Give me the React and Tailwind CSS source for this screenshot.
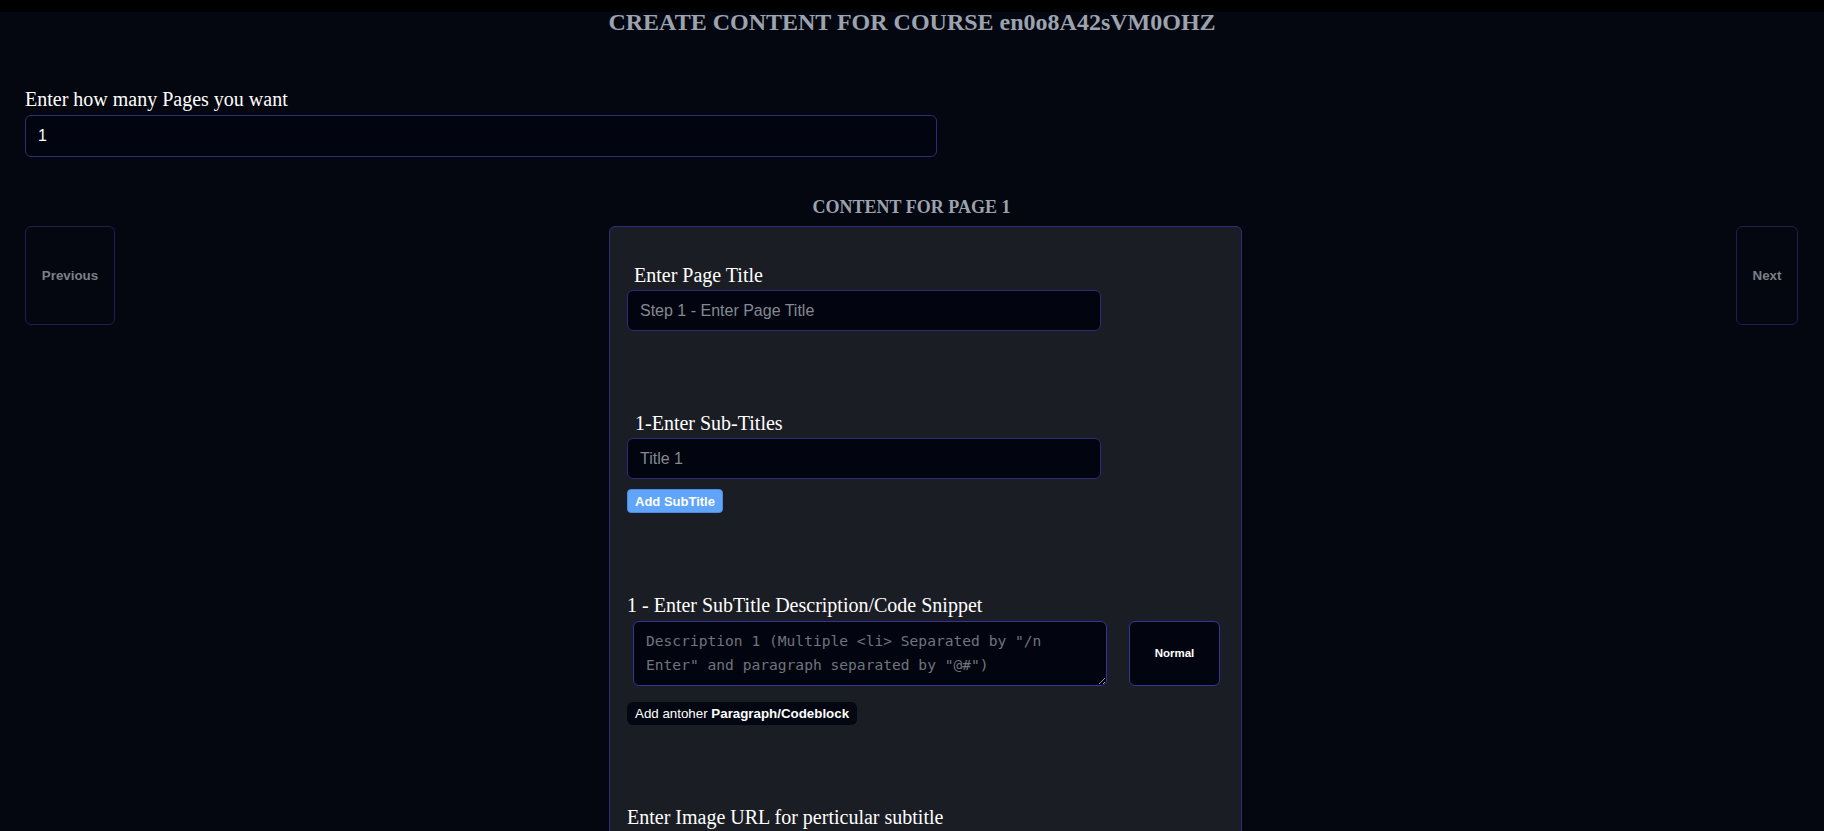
import React, { useState } from 'react';

const sans = "font-['Liberation_Sans',Arial,sans-serif]";

const Field = ({ placeholder, value, onChange, className = '' }) => (
    <input
        className={`${sans} block w-[474px] h-[41px] rounded-md border border-[#2e2b7a] bg-[#02050f] px-3 text-base text-white placeholder:text-[#858993] outline-none ${className}`}
        placeholder={placeholder}
        value={value}
        onChange={e => onChange(e.target.value)}
    />
);

const PageCard = () => {
    const [title, setTitle] = useState('');
    const [sub, setSub] = useState('');
    const [desc, setDesc] = useState('');
    const [img, setImg] = useState('');

    return (
        <div className="w-[633px] rounded-md border border-[#2f2c80] bg-[#1b1d24] px-[17px] pt-[34px] pb-10">
            {/* Page title */}
            <label className="block pl-[7px] text-xl leading-7 text-white">Enter Page Title</label>
            <Field className="mt-[1px]" placeholder="Step 1 - Enter Page Title" value={title} onChange={setTitle} />

            {/* Sub titles */}
            <label className="mt-[78px] block pl-[8px] text-xl leading-7 text-white">1-Enter Sub-Titles</label>
            <Field className="mt-[1px]" placeholder="Title 1" value={sub} onChange={setSub} />
            <button className={`${sans} mt-[10px] flex h-[24px] w-[96px] items-center justify-center rounded border border-[#4a8be3] bg-[#60a5fa] text-[13px] leading-none font-bold text-white`}>
                Add SubTitle
            </button>

            {/* Description */}
            <label className="mt-[78px] block text-xl leading-7 text-white">1 - Enter SubTitle Description/Code Snippet</label>
            <div className="mt-[2px] flex items-start gap-[22px]">
                <textarea
                    className="ml-[6px] block h-[65px] w-[474px] rounded-md border border-[#35339a] bg-[#02050f] px-3 py-[7px] font-['DejaVu_Sans_Mono',monospace] text-[14.6px] leading-6 text-white placeholder:text-[#70747e] outline-none"
                    placeholder={'Description 1 (Multiple <li> Separated by "/n Enter" and paragraph separated by "@#")'}
                    value={desc}
                    onChange={e => setDesc(e.target.value)}
                />
                <div className={`${sans} flex h-[65px] w-[91px] items-center justify-center rounded-md border border-[#35339a] bg-[#02050f] text-[11.5px] font-bold text-white`}>
                    Normal
                </div>
            </div>
            <button className={`${sans} mt-[16px] flex h-[23px] items-center rounded-md bg-[#030712] px-2 text-[13.33px] leading-none text-white`}>
                Add antoher&nbsp;<span className="font-bold">Paragraph/Codeblock</span>
            </button>

            {/* Image */}
            <label className="mt-[78px] block text-xl leading-7 text-white">Enter Image URL for perticular subtitle</label>
            <Field className="mt-[1px]" placeholder="Image URL 1" value={img} onChange={setImg} />
        </div>
    );
};

export default function App() {
    const [pages, setPages] = useState('1');

    return (
        <div className="h-[831px] overflow-hidden bg-[#04070f] font-['Liberation_Serif','Times_New_Roman',serif]">
            <div className="h-3 bg-black" />
            <h1 className="text-center text-2xl leading-[20px] font-bold text-[#9ca3af]">
                CREATE CONTENT FOR COURSE en0o8A42sVM0OHZ
            </h1>

            <div className="pl-[25px] pr-[26px]">
                <label className="mt-[53px] block text-xl leading-7 text-white">Enter how many Pages you want</label>
                <input
                    className={`${sans} mt-[2px] block h-[42px] w-[912px] rounded-md border border-[#2e2b7a] bg-[#02050f] px-3 text-base text-white outline-none`}
                    value={pages}
                    onChange={e => setPages(e.target.value)}
                />

                <h2 className="mt-[36px] text-center text-lg leading-7 font-bold text-[#9ca3af]">CONTENT FOR PAGE 1</h2>

                <div className="mt-[5px] flex items-start justify-between">
                    <button className={`${sans} h-[99px] w-[90px] rounded-md border border-[#1f1d52] text-[13.33px] font-bold text-[#7c7f88]`}>
                        Previous
                    </button>
                    <PageCard />
                    <button className={`${sans} h-[99px] w-[62px] rounded-md border border-[#1f1d52] text-[13.33px] font-bold text-[#7c7f88]`}>
                        Next
                    </button>
                </div>
            </div>
        </div>
    );
}
